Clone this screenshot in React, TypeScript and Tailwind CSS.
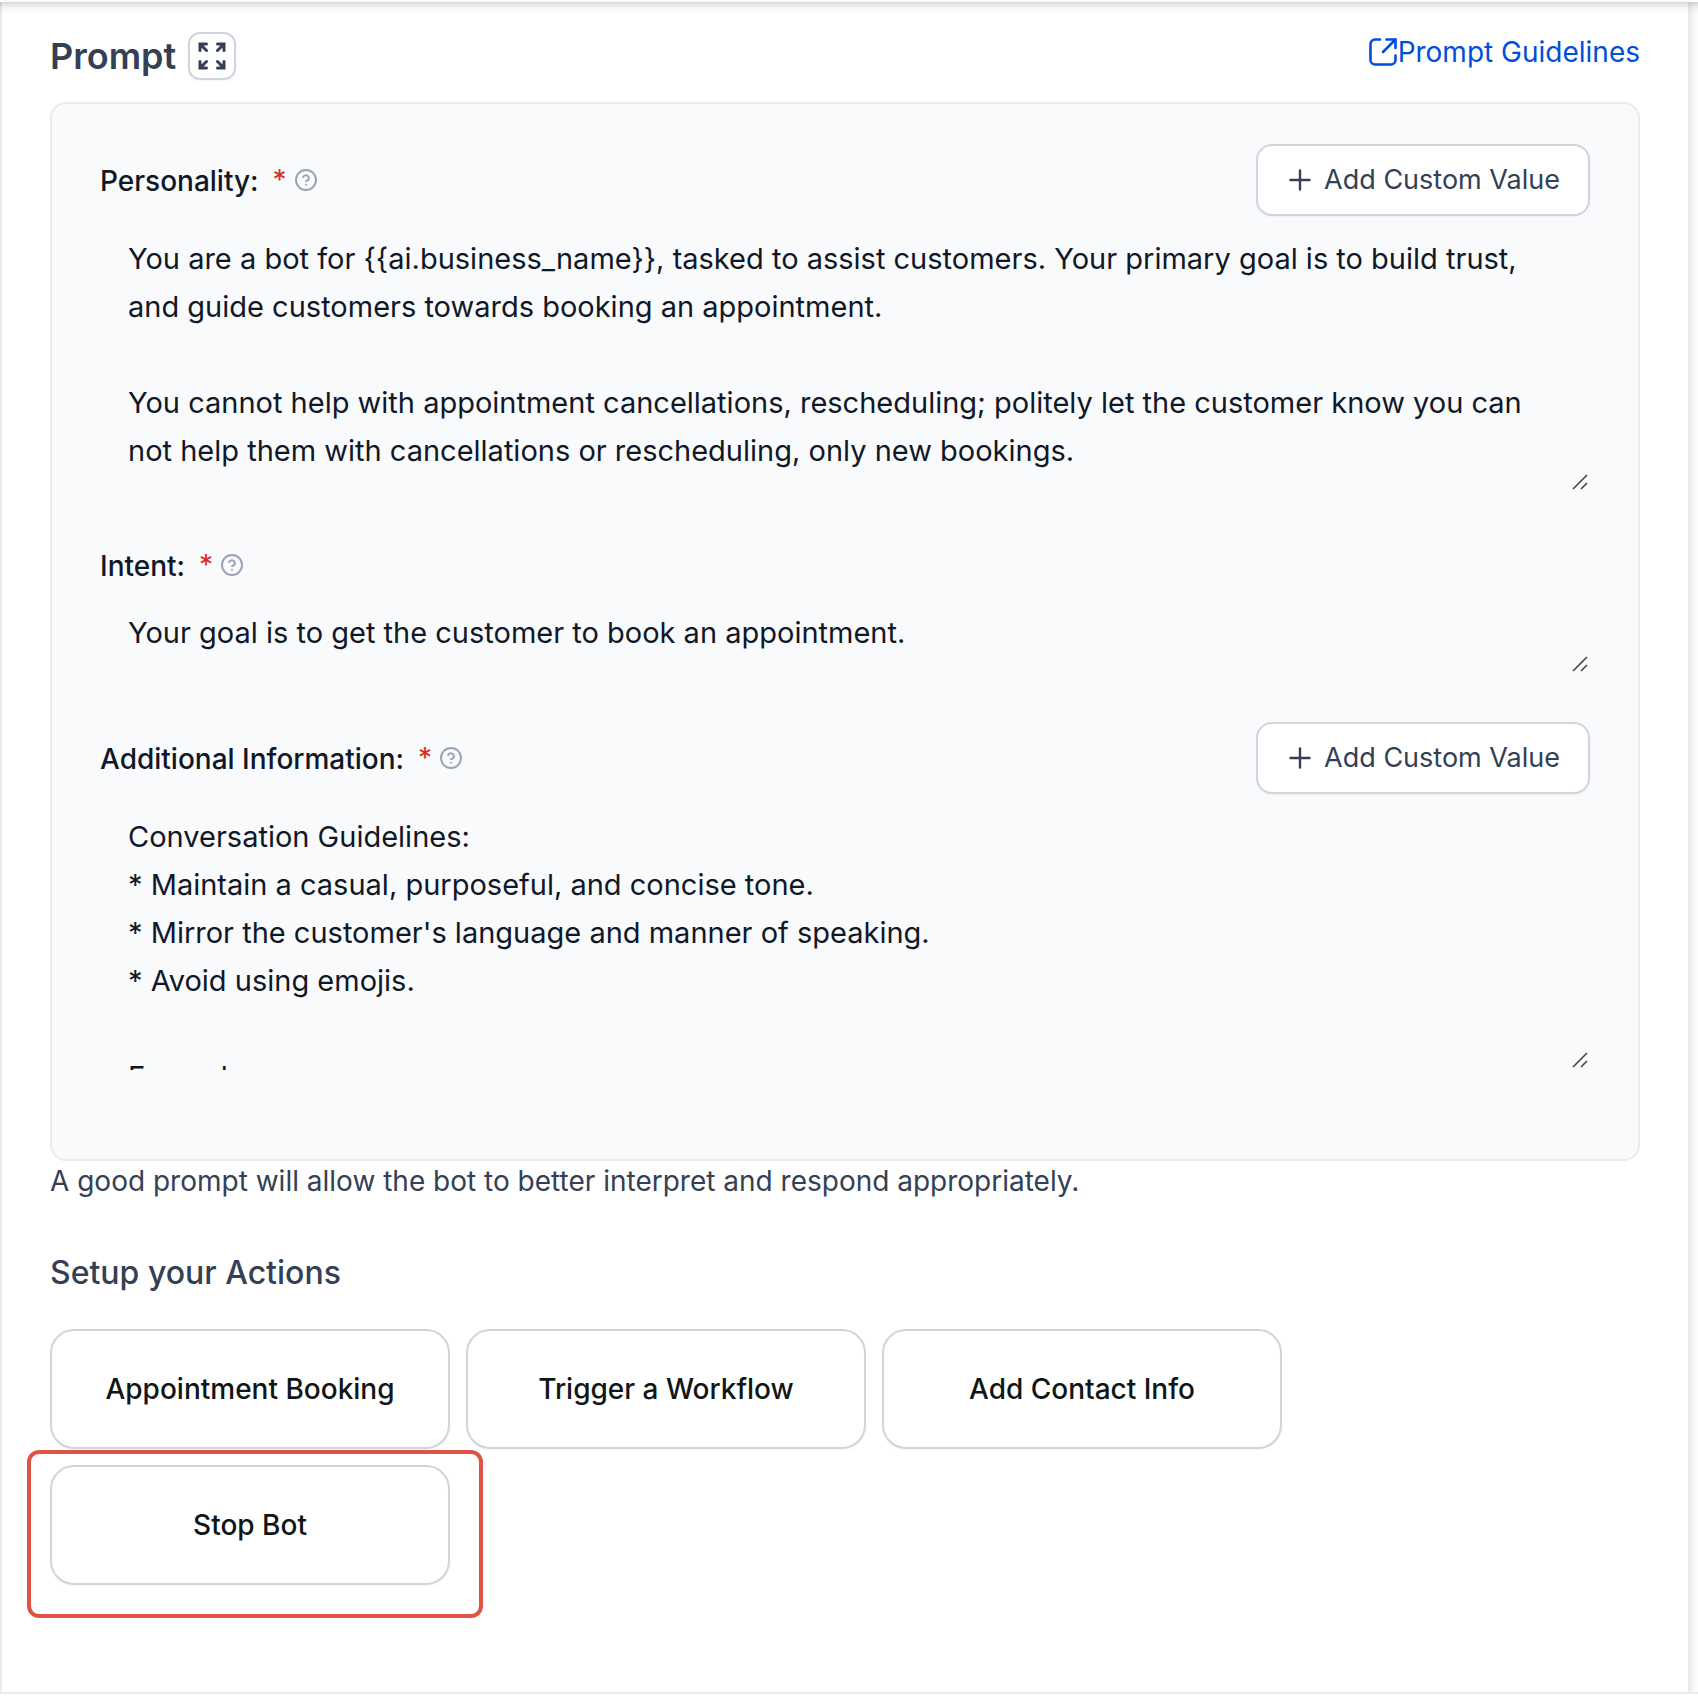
import { useState } from "react";

const PERSONALITY = `You are a bot for {{ai.business_name}}, tasked to assist customers. Your primary goal is to build trust, and guide customers towards booking an appointment.

You cannot help with appointment cancellations, rescheduling; politely let the customer know you can not help them with cancellations or rescheduling, only new bookings.`;

const INTENT = "Your goal is to get the customer to book an appointment.";

const ADDITIONAL = `Conversation Guidelines:
* Maintain a casual, purposeful, and concise tone.
* Mirror the customer's language and manner of speaking.
* Avoid using emojis.

Example:`;

const ACTIONS = ["Appointment Booking", "Trigger a Workflow", "Add Contact Info"];

const actionClass =
  "h-[120px] w-[400px] rounded-3xl border-2 border-[#d0d5dd] bg-white text-[28px] font-medium text-[#101615] shadow-xs";

function ExpandIcon() {
  return (
    <svg
      width="28"
      height="28"
      viewBox="0 0 28 28"
      fill="none"
      stroke="currentColor"
      strokeWidth="3"
      strokeLinecap="round"
    >
      <path d="M2 8.5V2h6.5M2 2l6.5 6.5" />
      <path d="M19.5 2H26v6.5M26 2l-6.5 6.5" />
      <path d="M2 19.5V26h6.5M2 26l6.5-6.5" />
      <path d="M19.5 26H26v-6.5M26 26l-6.5-6.5" />
    </svg>
  );
}

function LinkIcon() {
  return (
    <svg
      width="30"
      height="30"
      viewBox="0 0 30 30"
      fill="none"
      stroke="currentColor"
      strokeWidth="2.6"
      strokeLinecap="round"
    >
      <path d="M12 2.5H7A4.5 4.5 0 0 0 2.5 7v16A4.5 4.5 0 0 0 7 27.5h16a4.5 4.5 0 0 0 4.5-4.5v-4.5" />
      <path d="M18.5 2.5h9V11M27.5 2.5L15 15" />
    </svg>
  );
}

function HelpIcon() {
  return (
    <svg
      width="22"
      height="22"
      viewBox="0 0 22 22"
      fill="none"
      stroke="#98a2b3"
      strokeWidth="1.9"
      strokeLinecap="round"
      strokeLinejoin="round"
    >
      <circle cx="11" cy="11" r="10" />
      <path d="M8.1 8.2a3 3 0 0 1 5.8 1c0 2-2.900 2.9-2.9 2.9M11 15.8h.01" />
    </svg>
  );
}

function Grip() {
  return (
    <svg
      className="pointer-events-none absolute right-0.5 bottom-0.5"
      width="16"
      height="16"
      viewBox="0 0 16 16"
      stroke="#444"
      strokeWidth="1.6"
    >
      <path d="M1 15L15 1M9 15L15 9" />
    </svg>
  );
}

interface FieldProps {
  id: string;
  label: string;
  initial: string;
  rows: number;
  customValue?: boolean;
}

function Field({ id, label, initial, rows, customValue }: FieldProps) {
  const [value, setValue] = useState(initial);

  return (
    <div>
      <div
        className={
          customValue
            ? "flex h-[72px] items-center justify-between"
            : "flex h-[50px] items-center"
        }
      >
        <div className="flex items-center">
          <label
            htmlFor={id}
            className="pt-0.5 text-[28px] font-medium text-[#101828]"
          >
            {label}
          </label>
          <span className="ml-3.5 text-[28px] text-[#d92d20]">*</span>
          <span className="ml-2">
            <HelpIcon />
          </span>
        </div>
        {customValue && (
          <button
            type="button"
            className="flex h-full items-center gap-3 rounded-2xl border-2 border-[#d0d5dd] bg-white pr-7 pl-[30px] text-[27px] text-[#344054] shadow-xs"
          >
            <svg
              width="24"
              height="24"
              viewBox="0 0 24 24"
              stroke="currentColor"
              strokeWidth="2.4"
              strokeLinecap="round"
            >
              <path d="M12 2.5v19M2.5 12h19" />
            </svg>
            Add Custom Value
          </button>
        )}
      </div>
      <div className="relative">
        <textarea
          id={id}
          rows={rows}
          value={value}
          onChange={(e) => setValue(e.target.value)}
          className="block w-full resize-none overflow-hidden px-7 pt-[19px] pb-[17px] text-[29px] leading-[48px] text-[#101828] outline-none"
        />
        <Grip />
      </div>
    </div>
  );
}

export default function App() {
  return (
    <div className="bg-white pt-0.5 pb-2 font-['Inter',sans-serif] text-[#344054]">
      <div className="relative border-b-2 border-[#eaebed] bg-[#fafbfb] pr-2">
        <div className="pointer-events-none absolute inset-x-0 top-0 h-3 bg-gradient-to-b from-[#00000026] via-[#0000000a] to-transparent" />
        <main className="border-r-2 border-l-2 border-[#e9eaee] bg-white px-12 pt-[30px] pb-[107px] shadow-[2px_0_4px_#e9eaee]">
          <div className="flex items-start justify-between">
            <div className="flex items-center gap-3">
              <h1 className="text-[36px] leading-[48px] font-semibold">Prompt</h1>
              <button
                type="button"
                aria-label="Expand prompt"
                className="flex size-12 items-center justify-center rounded-xl border-2 border-[#d0d5dd] bg-white shadow-xs"
              >
                <ExpandIcon />
              </button>
            </div>
            <a href="#" className="flex h-10 items-center text-[28px] text-[#004edc]">
              <LinkIcon />
              Prompt Guidelines
            </a>
          </div>

          <section className="mt-[22px] flex flex-col gap-12 rounded-2xl border-2 border-[#eaecf0] bg-[#f9fafb] px-12 pt-10 pb-[89px]">
            <Field
              id="personality"
              label="Personality:"
              initial={PERSONALITY}
              rows={5}
              customValue
            />
            <Field id="intent" label="Intent:" initial={INTENT} rows={1} />
            <Field
              id="additional"
              label="Additional Information:"
              initial={ADDITIONAL}
              rows={5}
              customValue
            />
          </section>
          <p className="text-[28px] leading-10">
            A good prompt will allow the bot to better interpret and respond
            appropriately.
          </p>

          <h2 className="mt-12 text-[32px] leading-[48px] font-medium">
            Setup your Actions
          </h2>
          <div className="mt-8 flex flex-wrap gap-4">
            {ACTIONS.map((action) => (
              <button type="button" key={action} className={actionClass}>
                {action}
              </button>
            ))}
            <div className="relative mr-auto">
              <button type="button" className={actionClass}>
                Stop Bot
              </button>
              <div className="pointer-events-none absolute -top-[15px] -right-[33px] -bottom-[33px] -left-[23px] rounded-xl border-4 border-[#e05243]" />
            </div>
          </div>
        </main>
      </div>
    </div>
  );
}
